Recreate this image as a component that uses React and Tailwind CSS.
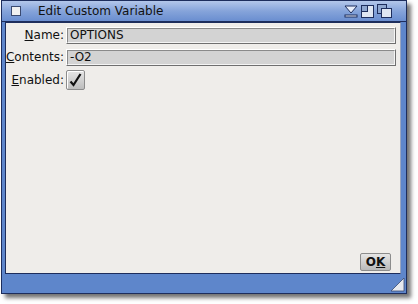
import React from 'react';

const font = { fontFamily: '"DejaVu Sans", "Liberation Sans", sans-serif' };

const Field = ({ value }) => (
  <div className="flex-1 h-[17px] border border-t-[#ffffff] border-l-[#ffffff] border-b-[#6f6f6f] border-r-[#6f6f6f]">
    <div className="h-full border border-t-[#8a8a8a] border-l-[#8a8a8a] border-b-[#f4f4f4] border-r-[#f4f4f4] bg-[#d3d3d3] px-[2px] text-[12px] leading-[13px] text-[#111]">
      {value}
    </div>
  </div>
);

const Label = ({ mnemonic, rest }) => (
  <div className="w-[58px] mr-[2px] flex justify-end whitespace-nowrap">
    <span><span className="underline">{mnemonic}</span>{rest}</span>
  </div>
);

const App = () => {
  return (
    <div className="w-[418px] h-[304px] bg-white" style={font}>
      <div className="ml-[1px] w-[406px] h-[294px] flex flex-col border border-[#1d2d5c] shadow-[4px_4px_4px_rgba(0,0,0,0.55)]">
        {/* Title bar */}
        <div className="h-[21px] flex items-center bg-gradient-to-b from-[#b3c7ea] via-[#86a4da] to-[#6a8ed0] border-b border-[#1d2d5c]">
          <div className="ml-[9px] w-[10px] h-[10px] bg-[#f0f0f0] border border-[#3a4a70]" />
          <span className="ml-[17px] text-[12px] text-[#111]">Edit Custom Variable</span>
          <div className="ml-auto mr-[14px] flex items-center gap-[3px]">
            <svg width="14" height="13" viewBox="0 0 14 13">
              <path d="M1 1h12L7 8z" fill="#e8eefa" stroke="#1d2d5c" strokeWidth="1" />
              <rect x="1" y="10" width="12" height="2" fill="#e8eefa" stroke="#1d2d5c" strokeWidth="1" />
            </svg>
            <svg width="13" height="13" viewBox="0 0 13 13">
              <rect x="0.5" y="0.5" width="12" height="12" fill="#dfe6f2" stroke="#1d2d5c" />
              <rect x="0.5" y="0.5" width="6" height="6" fill="#8ea6cf" stroke="#1d2d5c" />
            </svg>
            <svg width="15" height="14" viewBox="0 0 15 14">
              <rect x="0.5" y="0.5" width="9" height="9" fill="#8ea6cf" stroke="#1d2d5c" />
              <rect x="4.5" y="4.5" width="10" height="9" fill="#dfe6f2" stroke="#1d2d5c" />
            </svg>
          </div>
        </div>
        {/* Body */}
        <div className="flex-1 flex bg-[#5e86cb]">
          <div className="w-[3px]" />
          <div className="flex-1 flex flex-col bg-[#efedea] border-l border-t border-[#1d2d5c] border-r border-r-[#9aa6c0] border-b border-b-[#1d2d5c]">
            <div className="flex flex-col gap-[4px] pt-[3px] pr-[4px] text-[12px] text-[#111]">
              <div className="flex items-center">
                <Label mnemonic="N" rest="ame:" />
                <Field value="OPTIONS" />
              </div>
              <div className="flex items-center">
                <Label mnemonic="C" rest="ontents:" />
                <Field value="-O2" />
              </div>
              <div className="flex items-center">
                <Label mnemonic="E" rest="nabled:" />
                <div className="w-[19px] h-[20px] rounded-[2px] border border-[#8c8c8c] bg-gradient-to-b from-[#e6e6e6] to-[#bdbdbd] flex items-center justify-center shadow-[1px_1px_0_#fff_inset]">
                  <svg width="13" height="14" viewBox="0 0 13 14">
                    <path d="M1.5 8.5 L4.5 12 L11.5 1" fill="none" stroke="#111" strokeWidth="2.2" />
                  </svg>
                </div>
              </div>
            </div>
            <div className="mt-auto flex justify-end pr-[9px] pb-[2px]">
              <div className="w-[31px] h-[18px] rounded-[2px] border border-[#8c8c8c] bg-gradient-to-b from-[#e6e6e6] to-[#b9b9b9] flex items-center justify-center text-[12px] font-bold text-[#111]">
                O<span className="underline">K</span>
              </div>
            </div>
          </div>
          <div className="w-[5px]" />
        </div>
        {/* Bottom bar */}
        <div className="h-[19px] bg-[#5e86cb] flex items-end justify-end">
          <svg width="15" height="15" viewBox="0 0 15 15" className="mb-[1px] mr-[1px]">
            <path d="M14 1 L14 14 L1 14 Z" fill="#e6e9ef" stroke="#3a4a70" strokeWidth="0.8" />
          </svg>
        </div>
      </div>
    </div>
  );
};

export default App;
